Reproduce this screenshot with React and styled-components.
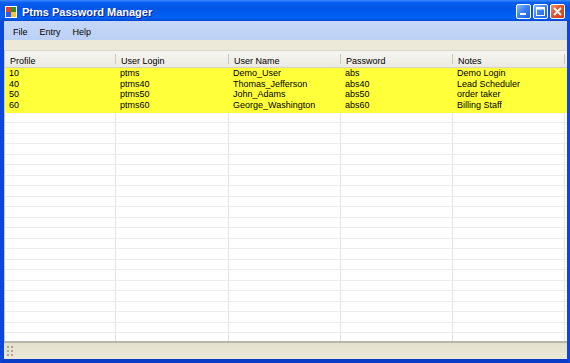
import React from "react";
import styled, { createGlobalStyle } from "styled-components";

const GlobalStyle = createGlobalStyle`
  html, body { margin: 0; padding: 0; overflow: hidden; background: #fff; }
  * { box-sizing: border-box; }
`;

const columns = [
  { key: "profile", label: "Profile", width: 111 },
  { key: "login", label: "User Login", width: 113 },
  { key: "name", label: "User Name", width: 112 },
  { key: "password", label: "Password", width: 112 },
  { key: "notes", label: "Notes", width: 112 },
];

const rows = [
  { profile: "10", login: "ptms", name: "Demo_User", password: "abs", notes: "Demo Login" },
  { profile: "40", login: "ptms40", name: "Thomas_Jefferson", password: "abs40", notes: "Lead Scheduler" },
  { profile: "50", login: "ptms50", name: "John_Adams", password: "abs50", notes: "order taker" },
  { profile: "60", login: "ptms60", name: "George_Washington", password: "abs60", notes: "Billing Staff" },
];

const EMPTY_ROWS = 23;

function App() {
  return (
    <>
      <GlobalStyle />
      <Window>
        <TitleBar>
          <AppIcon viewBox="0 0 12 12">
            <rect x="0" y="0" width="12" height="12" fill="#fff" />
            <rect x="1" y="1" width="5" height="5" fill="#e8402a" />
            <rect x="6" y="1" width="5" height="5" fill="#3a8b2c" />
            <rect x="1" y="6" width="5" height="5" fill="#2a5ee8" />
            <rect x="6" y="6" width="5" height="5" fill="#f5c531" />
          </AppIcon>
          <Title>Ptms Password Manager</Title>
          <Controls>
            <CtrlButton>
              <svg width="15" height="15" viewBox="0 0 15 15">
                <rect x="4" y="9" width="6" height="2" fill="#fff" />
              </svg>
            </CtrlButton>
            <CtrlButton>
              <svg width="15" height="15" viewBox="0 0 15 15">
                <rect x="3.5" y="3.5" width="8" height="8" fill="none" stroke="#fff" strokeWidth="1" />
                <rect x="3.5" y="3.5" width="8" height="2" fill="#fff" />
              </svg>
            </CtrlButton>
            <CtrlButton $close>
              <svg width="15" height="15" viewBox="0 0 15 15">
                <path d="M4 4 L11 11 M11 4 L4 11" stroke="#fff" strokeWidth="1.8" />
              </svg>
            </CtrlButton>
          </Controls>
        </TitleBar>
        <Frame>
          <MenuBar>
            <MenuItem>File</MenuItem>
            <MenuItem>Entry</MenuItem>
            <MenuItem>Help</MenuItem>
          </MenuBar>
          <Strip />
          <Grid>
            <HeaderRow>
              {columns.map((c) => (
                <HeaderCell key={c.key} $w={c.width}>{c.label}</HeaderCell>
              ))}
            </HeaderRow>
            <Body>
              {rows.map((r, i) => (
                <Row key={i} $highlight>
                  {columns.map((c) => (
                    <Cell key={c.key} $w={c.width} $highlight>{r[c.key]}</Cell>
                  ))}
                </Row>
              ))}
              <Row $highlight $tail />
              {Array.from({ length: EMPTY_ROWS }).map((_, i) => (
                <Row key={"e" + i}>
                  {columns.map((c) => (
                    <Cell key={c.key} $w={c.width} />
                  ))}
                </Row>
              ))}
            </Body>
          </Grid>
          <StatusBar>
            <Grip>
              {Array.from({ length: 6 }).map((_, i) => <Dot key={i} />)}
            </Grip>
          </StatusBar>
        </Frame>
      </Window>
    </>
  );
}

const Window = styled.div`
  width: 570px;
  height: 363px;
  display: flex;
  flex-direction: column;
  font-family: "Liberation Sans", Arial, sans-serif;
  background: #0842d8;
`;

const TitleBar = styled.div`
  height: 21px;
  flex: none;
  display: flex;
  align-items: center;
  padding: 2px 5px 0 5px;
  background: linear-gradient(to bottom, #3a8cff 0%, #0a5ff0 12%, #0055e8 40%, #0062f6 85%, #0052e0 95%, #0040c8 100%);
`;

const AppIcon = styled.svg`
  width: 12px;
  height: 12px;
  flex: none;
`;

const Title = styled.div`
  margin-left: 5px;
  padding-top: 1px;
  color: #fff;
  font-weight: bold;
  font-size: 11px;
  text-shadow: 1px 1px 0 #0a1e8c;
  flex: 1;
`;

const Controls = styled.div`
  display: flex;
  gap: 2px;
  margin-top: -1px;
`;

const CtrlButton = styled.div`
  width: 15px;
  height: 15px;
  border: 1px solid #fff;
  border-radius: 2px;
  display: flex;
  align-items: center;
  justify-content: center;
  background: ${(p) =>
    p.$close
      ? "linear-gradient(135deg, #f0936c 0%, #e0562c 45%, #c8401c 100%)"
      : "linear-gradient(135deg, #8fb8ff 0%, #3f83f5 45%, #1d5fe0 100%)"};
  svg { margin: -1px; flex: none; }
`;

const Frame = styled.div`
  flex: 1;
  display: flex;
  flex-direction: column;
  border-left: 4px solid #0a47dc;
  border-right: 3px solid #0a47dc;
  border-bottom: 4px solid #0a3cc8;
  background: #ece9d8;
  min-height: 0;
`;

const MenuBar = styled.div`
  height: 19px;
  flex: none;
  display: flex;
  align-items: center;
  padding: 2px 0 0 9px;
  background: linear-gradient(to bottom, #c6d8f8, #bcd0f4);
`;

const MenuItem = styled.div`
  font-size: 9px;
  color: #000;
  margin-right: 12px;
`;

const Strip = styled.div`
  height: 10px;
  flex: none;
  background: #ece9d8;
`;

const Grid = styled.div`
  flex: 1;
  min-height: 0;
  display: flex;
  flex-direction: column;
  background: #fff;
  border-top: 1px solid #d8d6ce;
  border-left: 1px solid #c8c6be;
  overflow: hidden;
`;

const HeaderRow = styled.div`
  height: 17px;
  flex: none;
  display: flex;
  background: linear-gradient(to bottom, #f6f5f0, #ebeae2);
  border-bottom: 1px solid #d5d2c4;
`;

const HeaderCell = styled.div`
  width: ${(p) => p.$w}px;
  flex: none;
  font-size: 9px;
  color: #000;
  padding: 3px 0 0 5px;
  display: flex;
  align-items: center;
  position: relative;
  &::after {
    content: "";
    position: absolute;
    right: 0;
    top: 3px;
    bottom: 3px;
    width: 1px;
    background: #cac8bb;
  }
`;

const Body = styled.div`
  flex: 1;
  overflow: hidden;
`;

const Row = styled.div`
  height: ${(p) => (p.$tail ? "2.5px" : "10.5px")};
  display: flex;
  background: ${(p) => (p.$highlight ? "#ffff3a" : "#fff")};
  border-bottom: ${(p) => (p.$tail ? "none" : `1px solid ${p.$highlight ? "#ffff3a" : "#ececec"}`)};
`;

const Cell = styled.div`
  width: ${(p) => p.$w}px;
  flex: none;
  font-size: 9px;
  line-height: 10px;
  color: #000;
  padding-left: 4px;
  white-space: nowrap;
  border-right: 1px solid ${(p) => (p.$highlight ? "#ffff3a" : "#e4e4e4")};
`;

const StatusBar = styled.div`
  height: 18px;
  flex: none;
  display: flex;
  align-items: flex-end;
  padding: 0 0 3px 2px;
  border-top: 2px solid #b8b5a6;
  background: linear-gradient(to bottom, #e2dfcd, #ece9d8);
`;

const Grip = styled.div`
  display: grid;
  grid-template-columns: repeat(2, 2px);
  gap: 2px;
  margin-left: 1px;
`;

const Dot = styled.div`
  width: 2px;
  height: 2px;
  background: #a8a595;
`;

export default App;
